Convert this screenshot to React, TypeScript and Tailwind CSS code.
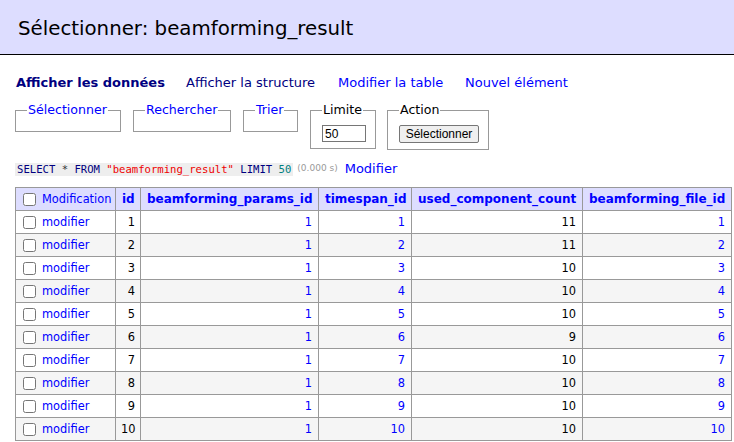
import React from "react";

const rows = [
  [1, 1, 1, 11, 1],
  [2, 1, 2, 11, 2],
  [3, 1, 3, 10, 3],
  [4, 1, 4, 10, 4],
  [5, 1, 5, 10, 5],
  [6, 1, 6, 9, 6],
  [7, 1, 7, 10, 7],
  [8, 1, 8, 10, 8],
  [9, 1, 9, 10, 9],
  [10, 1, 10, 10, 10],
];

function Box({ label, width, blue, children }: { label: string; width: string; blue?: boolean; children?: React.ReactNode }) {
  return (
    <fieldset className={`border border-[#999] pl-[11px] pr-[9px] pt-[7px] pb-[6px] ${width}`}>
      <legend className={`px-[1px] leading-[16px] text-[12.6px] ${blue ? "text-[#0000ff]" : "text-black"}`}>{label}</legend>
      {children}
    </fieldset>
  );
}

export default function App() {
  return (
    <div className="bg-white min-h-[442px] text-black" style={{ fontFamily: "Verdana, 'DejaVu Sans', sans-serif" }}>
      <div className="h-[55px] bg-[#ddf] border-b border-black flex items-center pl-[18px] pt-[3px]">
        <h2 className="text-[19.8px] font-normal leading-[24px]">Sélectionner: beamforming_result</h2>
      </div>

      <div className="mt-[20px] pl-[16px] flex text-[13px] leading-[16px]">
        <span className="w-[170px] font-bold text-[#000080]">Afficher les données</span>
        <span className="w-[152px] text-[#000080]">Afficher la structure</span>
        <span className="w-[127px] text-[#0000ff]">Modifier la table</span>
        <span className="text-[#0000ff]">Nouvel élément</span>
      </div>

      <div className="mt-[11px] pl-[15px] flex items-start gap-[12px]">
        <Box label="Sélectionner" width="w-[106px]" blue />
        <Box label="Rechercher" width="w-[98px]" blue />
        <Box label="Trier" width="w-[55px]" blue />
        <Box label="Limite" width="w-[66px]">
          <input
            defaultValue="50"
            className="block w-[44px] h-[17px] border border-[#767676] px-[2px] text-[12px] leading-[15px] text-black"
            style={{ fontFamily: "'Liberation Sans', Arial, sans-serif" }}
          />
        </Box>
        <div className="ml-[-1px]">
          <Box label="Action" width="w-[102px]">
            <button
              className="block h-[18px] w-[80px] border border-[#767676] bg-[#efefef] rounded-[2px] text-[12px] leading-[16px] text-black"
              style={{ fontFamily: "'Liberation Sans', Arial, sans-serif" }}
            >
              Sélectionner
            </button>
          </Box>
        </div>
      </div>

      <div className="mt-[11px] pl-[15px] flex items-center">
        <code
          className="bg-[#eee] px-[2px] h-[13px] leading-[13px] text-[10.6px] whitespace-pre"
          style={{ fontFamily: "'DejaVu Sans Mono', 'Liberation Mono', monospace" }}
        >
          <span className="text-[#000080]">SELECT</span>
          <span className="text-[#333]"> * </span>
          <span className="text-[#000080]">FROM</span>{" "}
          <span className="text-[#ee0000]">"beamforming_result"</span>{" "}
          <span className="text-[#000080]">LIMIT</span>{" "}
          <span className="text-[#008080]">50</span>
        </code>
        <span className="ml-[4px] text-[9px] text-[#999]">(0.000 s)</span>
        <span className="ml-[7px] text-[13px] text-[#0000ff] leading-[16px]">Modifier</span>
      </div>

      <div className="mt-[10px] pl-[15px]">
        <table className="border-collapse table-fixed w-[716px] text-[11.4px] leading-[16px]">
          <colgroup>
            <col className="w-[100px]" />
            <col className="w-[25px]" />
            <col className="w-[178px]" />
            <col className="w-[93px]" />
            <col className="w-[171px]" />
            <col className="w-[149px]" />
          </colgroup>
          <thead>
            <tr className="bg-[#ddf]">
              <th className="border border-[#999] px-0 py-[3px] text-left font-normal whitespace-nowrap">
                <label className="flex items-center text-[#0000ff]">
                  <input type="checkbox" className="ml-[7px] mr-[6px] w-[13px] h-[13px]" />
                  Modification
                </label>
              </th>
              {["id", "beamforming_params_id", "timespan_id", "used_component_count", "beamforming_file_id"].map((h) => (
                <th key={h} className="border border-[#999] px-[6px] py-[3px] text-left text-[12px] font-bold text-[#0000ff] whitespace-nowrap">
                  {h}
                </th>
              ))}
            </tr>
          </thead>
          <tbody>
            {rows.map((r, i) => (
              <tr key={i} className={i % 2 === 1 ? "bg-[#f5f5f5]" : "bg-white"}>
                <td className="border border-[#999] px-0 py-[3px]">
                  <label className="flex items-center text-[#0000ff]">
                    <input type="checkbox" className="ml-[7px] mr-[6px] w-[13px] h-[13px]" />
                    modifier
                  </label>
                </td>
                <td className="border border-[#999] px-[5px] py-[3px] text-right text-black">{r[0]}</td>
                <td className="border border-[#999] px-[6px] py-[3px] text-right text-[#0000ff]">{r[1]}</td>
                <td className="border border-[#999] px-[6px] py-[3px] text-right text-[#0000ff]">{r[2]}</td>
                <td className="border border-[#999] px-[6px] py-[3px] text-right text-black">{r[3]}</td>
                <td className="border border-[#999] px-[6px] py-[3px] text-right text-[#0000ff]">{r[4]}</td>
              </tr>
            ))}
          </tbody>
        </table>
      </div>
    </div>
  );
}
